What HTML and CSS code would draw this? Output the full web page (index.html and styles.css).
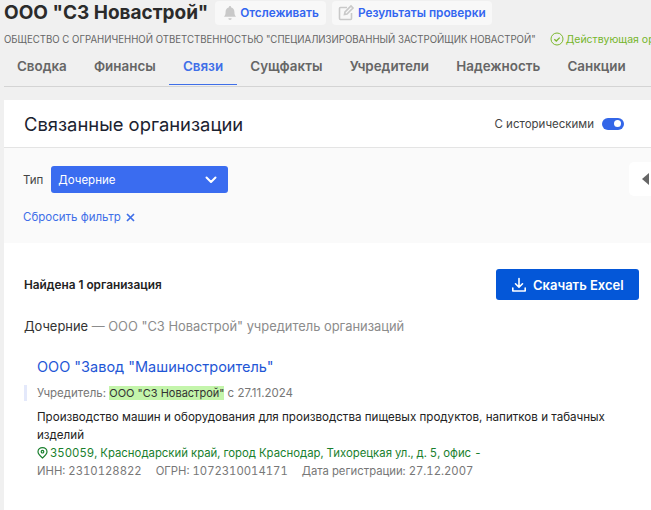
FILE: index.html
```html
<!DOCTYPE html>
<html>
<head>
	<title>ООО "СЗ Новастрой"</title>
	<meta charset="UTF-8">
	<link rel="stylesheet" href="styles.css">
</head>
<body>
	<div class="top_row">
		<h1 class="company_name">ООО "СЗ Новастрой"</h1>
		<a class="top_button track_button">
			<svg width="16" height="16" viewBox="0 0 16 16"><path fill="#c9c9c9" d="M8 1a1.2 1.2 0 0 1 1.2 1.2v.3c2 .5 3.2 2.2 3.2 4.3 0 2.6.5 3.7 1.6 5H2c1.100-1.300 1.600-2.400 1.600-5 0-2.100 1.200-3.800 3.200-4.300v-.3A1.200 1.200 0 0 1 8 1zM6.300 13.200h3.400a1.700 1.700 0 0 1-3.400 0z"/></svg>
			Отслеживать
		</a>
		<a class="top_button check_button">
			<svg width="18" height="18" viewBox="0 0 18 18" fill="none" stroke="#c9c9c9" stroke-width="1.600"><path d="M10 3.500H3.500a1 1 0 0 0-1 1v10a1 1 0 0 0 1 1h10a1 1 0 0 0 1-1V9"/><path d="M7.500 10.500l.5-2.500 6-6 2 2-6 6z"/></svg>
			Результаты проверки
		</a>
	</div>
	<div class="full_name_row">
		<span class="full_name">ОБЩЕСТВО С ОГРАНИЧЕННОЙ ОТВЕТСТВЕННОСТЬЮ "СПЕЦИАЛИЗИРОВАННЫЙ ЗАСТРОЙЩИК НОВАСТРОЙ"</span>
		<span class="status">
			<svg width="14" height="14" viewBox="0 0 14 14" fill="none" stroke="#7cb82f" stroke-width="1"><circle cx="7" cy="7" r="6"/><path stroke-width="1.300" d="M4.300 7.200l2 1.800 3.400-3.400"/></svg>
			<span class="status_text">Действующая организация</span>
		</span>
	</div>
	<nav class="tabs">
		<a class="tab">Сводка</a>
		<a class="tab">Финансы</a>
		<a class="tab tab_active">Связи</a>
		<a class="tab">Сущфакты</a>
		<a class="tab">Учредители</a>
		<a class="tab">Надежность</a>
		<a class="tab">Санкции</a>
	</nav>
	<div class="card">
		<div class="card_header">
			<h2 class="card_title">Связанные организации</h2>
			<div class="history_switch">
				<span>С историческими</span>
				<span class="toggle"><span class="toggle_knob"></span></span>
			</div>
		</div>
		<div class="filter_box">
			<div class="filter_row">
				<span class="filter_label">Тип</span>
				<div class="select_box">
					<span>Дочерние</span>
					<svg width="14" height="14" viewBox="0 0 14 14" fill="none" stroke="#fff" stroke-width="2" stroke-linecap="round" stroke-linejoin="round"><path d="M2.500 4.500L7 9l4.500-4.500"/></svg>
				</div>
			</div>
			<a class="reset_link">Сбросить фильтр
				<svg width="9" height="9" viewBox="0 0 9 9" fill="none" stroke="#3f6fe8" stroke-width="1.700"><path d="M1 1l7 7M8 1l-7 7"/></svg>
			</a>
			<div class="side_tab"><span class="side_arrow"></span></div>
		</div>
		<div class="results">
			<div class="results_head">
				<span class="found">Найдена 1 организация</span>
				<a class="excel_button">
					<svg width="16" height="16" viewBox="0 0 16 16" fill="none" stroke="#fff" stroke-width="1.600" stroke-linecap="round" stroke-linejoin="round"><path d="M8 1.500v8.500M4.500 6.800L8 10.300l3.500-3.500M1.800 11v3h12.400v-3"/></svg>
					Скачать Excel
				</a>
			</div>
			<div class="group_title"><span class="group_name">Дочерние</span> — ООО "СЗ Новастрой" учредитель организаций</div>
			<div class="org">
				<a class="org_name">ООО "Завод "Машиностроитель"</a>
				<div class="org_founder">Учредитель: <mark>ООО "СЗ Новастрой"</mark> с 27.11.2024</div>
				<div class="org_activity">Производство машин и оборудования для производства пищевых продуктов, напитков и табачных изделий</div>
				<div class="org_address">
					<svg width="11" height="12" viewBox="0 0 11 12" fill="none" stroke="#1a7f2e" stroke-width="1.200"><path d="M5.500 11C3 8.800 1 6.900 1 4.700a4.500 4.100 0 0 1 9 0C10 6.900 8 8.800 5.500 11z"/><circle cx="5.500" cy="4.700" r="1.300"/></svg>
					350059, Краснодарский край, город Краснодар, Тихорецкая ул., д. 5, офис -
				</div>
				<div class="org_codes">
					<span>ИНН: 2310128822</span>
					<span>ОГРН: 1072310014171</span>
					<span>Дата регистрации: 27.12.2007</span>
				</div>
			</div>
		</div>
	</div>
</body>
</html>
```

FILE: styles.css
```css
html, body {
	height: 100%;
}

body {
	margin: 0;
	background-color: #f0f0f0;
	font-family: Inter, "Noto Sans", sans-serif;
	color: #222;
	overflow: hidden;
}

a {
	text-decoration: none;
}

.top_row {
	display: flex;
	align-items: center;
	height: 25px;
	padding-left: 4px;
}

.company_name {
	margin: 0;
	font-size: 19px;
	font-weight: 700;
	color: #2b2b2b;
	white-space: nowrap;
}

.top_button {
	display: flex;
	align-items: center;
	height: 24px;
	background-color: #f8f8f8;
	border-radius: 4px;
	color: #3366f0;
	font-size: 11.800px;
	font-weight: 600;
	white-space: nowrap;
}

.track_button {
	gap: 2px;
	margin-left: 7px;
	padding: 0 7px;
}

.check_button {
	gap: 3px;
	margin-left: 6px;
	padding: 0 6px 0 5px;
}

.full_name_row {
	display: flex;
	align-items: center;
	height: 16px;
	margin-top: 6px;
	padding-left: 4px;
	white-space: nowrap;
	overflow: hidden;
}

.full_name {
	flex-shrink: 0;
	font-size: 9.630px;
	color: #666;
}

.status {
	display: flex;
	align-items: center;
	gap: 2px;
	flex-shrink: 0;
	margin-left: 14px;
	font-size: 10.500px;
	color: #75b52a;
}

.tabs {
	display: flex;
	align-items: flex-start;
	height: 39px;
	margin-left: 4px;
	border-bottom: 1px solid #d4d4d4;
}

.tab {
	height: 38px;
	box-sizing: border-box;
	padding: 11px 13.600px 0;
	font-size: 13.400px;
	font-weight: 600;
	color: #666;
	white-space: nowrap;
}

.tab:first-child {
	padding-left: 13px;
}

.tab_active {
	color: #3f6fe8;
	border-bottom: 1px solid #3f6fe8;
}

.card {
	margin-top: 13px;
	margin-left: 4px;
	background-color: #fff;
	height: 410px;
}

.card_header {
	display: flex;
	align-items: center;
	justify-content: space-between;
	height: 47px;
	padding: 0 27px 0 20px;
	border-bottom: 1px solid #e4e4e4;
}

.card_title {
	margin: 0;
	font-size: 18.400px;
	font-weight: 400;
	color: #1b2230;
}

.history_switch {
	display: flex;
	align-items: center;
	gap: 8px;
	font-size: 11.500px;
	color: #444;
}

.toggle {
	display: flex;
	align-items: center;
	justify-content: flex-end;
	width: 22px;
	height: 12px;
	padding-right: 3px;
	box-sizing: border-box;
	background-color: #3366e8;
	border-radius: 6px;
}

.toggle_knob {
	width: 7px;
	height: 7px;
	background-color: #fff;
	border-radius: 50%;
}

.filter_box {
	position: relative;
	height: 95px;
	padding: 18px 0 0 19px;
	box-sizing: border-box;
	background-color: #fafafa;
}

.filter_row {
	display: flex;
	align-items: center;
	gap: 8px;
}

.filter_label {
	font-size: 11.500px;
	color: #444;
}

.select_box {
	display: flex;
	align-items: center;
	justify-content: space-between;
	width: 177px;
	height: 27px;
	padding: 0 10px 0 7px;
	box-sizing: border-box;
	background-color: #3a6cf0;
	border-radius: 3px;
	color: #fff;
	font-size: 11.500px;
}

.reset_link {
	display: flex;
	align-items: center;
	gap: 5px;
	margin-top: 17px;
	font-size: 11.500px;
	color: #3f6fe8;
}

.side_tab {
	position: absolute;
	right: 0;
	top: 14px;
	display: flex;
	align-items: center;
	width: 22px;
	height: 34px;
	padding-left: 13px;
	box-sizing: border-box;
	background-color: #fff;
	border-radius: 5px 0 0 5px;
}

.side_arrow {
	border-top: 6px solid transparent;
	border-bottom: 6px solid transparent;
	border-right: 7px solid #666;
}

.results {
	padding: 26px 12px 0 20px;
}

.results_head {
	display: flex;
	align-items: center;
	justify-content: space-between;
	height: 31px;
}

.found {
	font-size: 11.800px;
	font-weight: 600;
	color: #222;
}

.excel_button {
	display: flex;
	align-items: center;
	gap: 6px;
	width: 143px;
	height: 31px;
	padding-left: 15px;
	box-sizing: border-box;
	background-color: #0457d8;
	border-radius: 3px;
	color: #fff;
	font-size: 13px;
	font-weight: 600;
}

.group_title {
	margin-top: 19px;
	font-size: 12.900px;
	color: #8c8c8c;
}

.group_name {
	color: #333;
}

.org {
	margin-top: 24px;
	margin-left: 13px;
	font-size: 11.500px;
	line-height: 18px;
}

.org_name {
	display: block;
	font-size: 14.500px;
	color: #1f57d6;
}

.org_founder {
	position: relative;
	margin-top: 8px;
	color: #777;
}

.org_founder:before {
	content: "";
	position: absolute;
	left: -13px;
	top: 1px;
	width: 3px;
	height: 16px;
	background-color: #e4e9fb;
}

.org_founder mark {
	background-color: #c4f5ab;
	color: #333;
	font-size: 11px;
}

.org_activity {
	margin-top: 6px;
	font-size: 11.600px;
	color: #222;
}

.org_address {
	display: flex;
	align-items: center;
	gap: 2px;
	font-size: 11.370px;
	font-variant-numeric: tabular-nums;
	color: #1a7f2e;
}

.org_codes {
	display: flex;
	gap: 14px;
	font-size: 11.300px;
	font-variant-numeric: tabular-nums;
	color: #777;
}
```
